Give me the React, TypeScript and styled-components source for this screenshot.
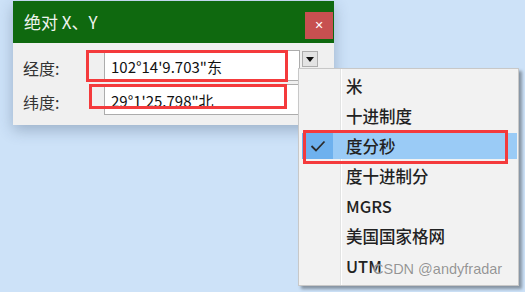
import styled, { createGlobalStyle } from "styled-components";

const GlobalStyle = createGlobalStyle`
  html, body {
    margin: 0;
    padding: 0;
    background: #cde2f8;
  }
  * {
    box-sizing: border-box;
  }
`;

const units = ["米", "十进制度", "度分秒", "度十进制分", "MGRS", "美国国家格网", "UTM"];
const selectedUnit = "度分秒";

const App = () => {
  return (
    <StDesktop>
      <GlobalStyle />
      <StDialog>
        <StTitleBar>
          <StTitle>绝对 X、Y</StTitle>
          <StCloseBtn type="button">✕</StCloseBtn>
        </StTitleBar>
        <StBody>
          <StLabel>经度:</StLabel>
          <StField readOnly value={`102°14'9.703"东`} />
          <StDropBtn type="button">
            <StTriangle />
          </StDropBtn>
          <StLabel>纬度:</StLabel>
          <StField readOnly value={`29°1'25.798"北`} />
        </StBody>
      </StDialog>

      <StMenu>
        {units.map((unit) => {
          const active = unit === selectedUnit;
          return (
            <StItem key={unit} $active={active}>
              <StCheckCell $active={active}>
                {active && (
                  <svg width="16" height="12" viewBox="0 0 16 12">
                    <polyline
                      points="1.5,6 6,10.5 14.5,1.5"
                      fill="none"
                      stroke="#2b2b2b"
                      strokeWidth="1.8"
                    />
                  </svg>
                )}
              </StCheckCell>
              <StItemText>{unit}</StItemText>
            </StItem>
          );
        })}
      </StMenu>

      <StMark $left={86} $top={50} $width={202} $height={32} />
      <StMark $left={89} $top={84} $width={198} $height={25} />
      <StMark $left={303} $top={130} $width={205} $height={34} />

      <StWatermark>CSDN @andyfradar</StWatermark>
    </StDesktop>
  );
};

export default App;

const StDesktop = styled.div`
  position: relative;
  width: 525px;
  height: 292px;
  overflow: hidden;
  background: #cde2f8;
  font-family: "Noto Sans CJK SC", "Noto Sans", sans-serif;
`;

const StDialog = styled.div`
  position: absolute;
  left: 13px;
  top: 1px;
  width: 321px;
  display: flex;
  flex-direction: column;
  background: #f0f0f0;
  box-shadow: 0 5px 14px rgba(40, 60, 90, 0.3);
`;

const StTitleBar = styled.div`
  height: 42px;
  display: flex;
  align-items: flex-start;
  justify-content: space-between;
  background: #0f690f;
  padding-left: 11px;
`;

const StTitle = styled.div`
  color: #eef3ee;
  font-size: 17px;
  line-height: 42px;
`;

const StCloseBtn = styled.button`
  width: 28px;
  height: 27px;
  margin-top: 11px;
  margin-right: 1px;
  border: none;
  padding: 0;
  background: #c75050;
  color: #fff;
  font-size: 11px;
  font-weight: bold;
  font-family: "DejaVu Sans", sans-serif;
`;

const StBody = styled.div`
  display: grid;
  grid-template-columns: 79px 196px 16px;
  grid-auto-rows: 31px;
  column-gap: 2px;
  row-gap: 3px;
  padding: 7px 0 10px 10px;
  height: 82px;
`;

const StLabel = styled.div`
  grid-column: 1;
  font-size: 16px;
  color: #333;
  line-height: 31px;
  padding-top: 3px;
`;

const StField = styled.input`
  grid-column: 2;
  width: 100%;
  height: 31px;
  border: 1px solid #acacac;
  background: #fff;
  padding: 2px 0 0 6px;
  font-size: 15px;
  font-family: "Noto Sans CJK SC", "Noto Sans", sans-serif;
  color: #111;
  outline: none;
`;

const StDropBtn = styled.button`
  grid-column: 3;
  align-self: start;
  margin-top: 1px;
  width: 16px;
  height: 16px;
  padding: 0;
  border: 1px solid #adadad;
  background: #e3e3e3;
  display: flex;
  align-items: center;
  justify-content: center;
`;

const StTriangle = styled.span`
  width: 0;
  height: 0;
  border-left: 4px solid transparent;
  border-right: 4px solid transparent;
  border-top: 5px solid #111;
`;

const StMenu = styled.div`
  position: absolute;
  left: 298px;
  top: 68px;
  width: 221px;
  height: 218px;
  padding: 0 1px 0 3px;
  display: flex;
  flex-direction: column;
  border: 1px solid #c8c8c8;
  background: linear-gradient(
      to right,
      transparent 41px,
      #e2e3e3 41px,
      #e2e3e3 42px,
      #ffffff 42px,
      #ffffff 43px,
      transparent 43px
    ),
    #f2f2f2;
  box-shadow: 3px 3px 3px rgba(0, 0, 0, 0.35);
`;

const StItem = styled.div<{ $active: boolean }>`
  height: 26px;
  margin: 2px 0;
  display: flex;
  align-items: center;
  background: ${(p) => (p.$active ? "#9acbf6" : "transparent")};
  &:first-child {
    margin-top: 4px;
  }
`;

const StCheckCell = styled.div<{ $active: boolean }>`
  width: 31px;
  height: 100%;
  display: flex;
  align-items: center;
  justify-content: center;
  background: ${(p) => (p.$active ? "#6eb1ee" : "transparent")};
`;

const StItemText = styled.div`
  padding-left: 13px;
  font-size: 16.5px;
  font-weight: 500;
  color: #222;
`;

const StMark = styled.div<{
  $left: number;
  $top: number;
  $width: number;
  $height: number;
}>`
  position: absolute;
  left: ${(p) => p.$left}px;
  top: ${(p) => p.$top}px;
  width: ${(p) => p.$width}px;
  height: ${(p) => p.$height}px;
  border: 3px solid #f43a3c;
`;

const StWatermark = styled.div`
  position: absolute;
  left: 373px;
  top: 261px;
  font-family: "Liberation Sans", Arial, sans-serif;
  font-size: 14.5px;
  color: rgba(130, 130, 130, 0.85);
  text-shadow: 0 0 1px rgba(255, 255, 255, 0.8);
`;
